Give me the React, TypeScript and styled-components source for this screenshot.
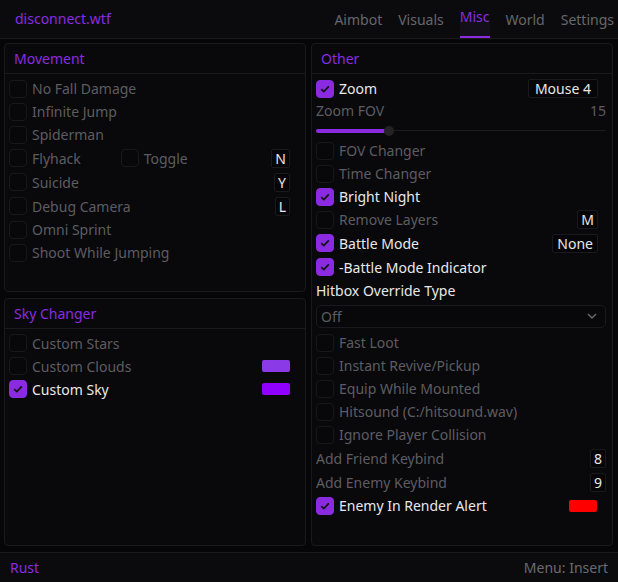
import React from "react";
import styled, { createGlobalStyle } from "styled-components";

const accent = "#8a2be2";
const bright = "#e8e8ea";
const dim = "#5d5d61";
const line = "#1a191d";

const GlobalStyle = createGlobalStyle`
  html, body {
    margin: 0;
    padding: 0;
    background: #050507;
  }
  body {
    font-family: "Noto Sans", "Open Sans", sans-serif;
    font-size: 14px;
    color: ${bright};
  }
`;

const Window = styled.div`
  width: 618px;
  height: 582px;
  display: flex;
  flex-direction: column;
  background: #060608;
  overflow: hidden;
`;

const Header = styled.div`
  height: 38px;
  flex: none;
  display: flex;
  align-items: stretch;
  background: #0b0b0d;
  border-bottom: 1px solid ${line};
  padding: 0 4px 0 15px;
`;

const Brand = styled.div`
  color: ${accent};
  display: flex;
  align-items: center;
  padding-bottom: 1px;
`;

const Tabs = styled.div`
  margin-left: auto;
  display: flex;
  gap: 16px;
`;

const Tab = styled.div<{ $active?: boolean }>`
  display: flex;
  align-items: center;
  padding-top: ${({ $active }) => ($active ? "0" : "2px")};
  padding-bottom: ${({ $active }) => ($active ? "4px" : "0")};
  color: ${({ $active }) => ($active ? accent : "#67676b")};
  background: ${({ $active }) =>
    $active ? "linear-gradient(#0b0b0d 55%, #141019 55%)" : "transparent"};
  border-bottom: 2px solid ${({ $active }) => ($active ? accent : "transparent")};
  box-sizing: border-box;
  height: 38px;
`;

const Body = styled.div`
  flex: 1;
  display: grid;
  grid-template-columns: 1fr 1fr;
  gap: 5px;
  padding: 4px 5px 6px 4px;
  min-height: 0;
`;

const Column = styled.div`
  display: flex;
  flex-direction: column;
  gap: 6px;
  min-height: 0;
`;

const Panel = styled.div`
  flex: 1;
  background: #09080b;
  border: 1px solid ${line};
  border-radius: 4px;
  display: flex;
  flex-direction: column;
  min-height: 0;
`;

const PanelTitle = styled.div`
  height: 29px;
  flex: none;
  display: flex;
  align-items: center;
  padding-left: 9px;
  color: ${accent};
  border-bottom: 1px solid ${line};
`;

const PanelBody = styled.div`
  padding: 3px 15px 0 4px;
  display: flex;
  flex-direction: column;
`;

const Row = styled.div<{ $h?: number }>`
  height: ${({ $h }) => $h ?? 23}px;
  display: flex;
  align-items: center;
  flex: none;
`;

const Box = styled.span<{ $on?: boolean }>`
  width: 18px;
  height: 18px;
  box-sizing: border-box;
  border-radius: 4px;
  flex: none;
  display: flex;
  align-items: center;
  justify-content: center;
  background: ${({ $on }) => ($on ? accent : "#08070a")};
  border: 1px solid ${({ $on }) => ($on ? accent : "#18171b")};
`;

const Label = styled.span<{ $on?: boolean; $gap?: number }>`
  margin-left: ${({ $gap }) => $gap ?? 5}px;
  color: ${({ $on }) => ($on ? bright : dim)};
  white-space: nowrap;
`;

const Right = styled.div<{ $out?: number }>`
  margin-left: auto;
  margin-right: ${({ $out }) => -($out ?? 0)}px;
  display: flex;
  align-items: center;
`;

const Key = styled.span<{ $pad?: number }>`
  height: 19px;
  box-sizing: border-box;
  padding: 0 ${({ $pad }) => $pad ?? 3}px;
  display: flex;
  align-items: center;
  justify-content: center;
  border: 1px solid ${line};
  border-radius: 2px;
  background: #060608;
  color: ${bright};
  font-size: 14px;
`;

const Swatch = styled.span<{ $color: string }>`
  width: 28px;
  height: 12px;
  border-radius: 2px;
  background: ${({ $color }) => $color};
`;

const Value = styled.span`
  margin-left: auto;
  color: ${dim};
  margin-right: -9px;
`;

const SliderTrack = styled.div`
  position: relative;
  flex: 1;
  height: 1px;
  margin-right: -9px;
  background: #1c1b20;
`;

const SliderFill = styled.div`
  height: 4px;
  margin-top: -1px;
  background: ${accent};
  border-radius: 2px;
`;

const SliderGrab = styled.div`
  position: absolute;
  top: -4px;
  width: 10px;
  height: 10px;
  margin-left: -5px;
  border-radius: 50%;
  background: #242328;
`;

const Combo = styled.div`
  flex: 1;
  margin-right: -9px;
  height: 23px;
  box-sizing: border-box;
  border: 1px solid ${line};
  border-radius: 5px;
  display: flex;
  align-items: center;
  padding: 0 8px 0 4px;
  color: ${dim};
  background: #08070a;
`;

const Footer = styled.div`
  height: 29px;
  flex: none;
  display: flex;
  align-items: center;
  justify-content: space-between;
  padding: 0 10px;
  background: #0b0b0d;
  border-top: 1px solid ${line};
`;

const FooterBrand = styled.span`
  color: ${accent};
`;

const FooterHint = styled.span`
  color: #6a6a6e;
`;

const Check = () => (
  <svg width="10" height="8" viewBox="0 0 10 8">
    <path d="M1.2 4.2 L3.8 6.6 L8.8 1.4" stroke="#111" strokeWidth="1.7" fill="none" />
  </svg>
);

const Toggle: React.FC<{ on?: boolean; label: string; gap?: number }> = ({ on, label, gap }) => (
  <>
    <Box $on={on}>{on && <Check />}</Box>
    <Label $on={on} $gap={gap}>
      {label}
    </Label>
  </>
);

const Chevron = () => (
  <svg width="10" height="6" viewBox="0 0 10 6">
    <path d="M1 1 L5 5 L9 1" stroke="#6a6a70" strokeWidth="1.4" fill="none" />
  </svg>
);

const App = () => {
  const fov = 15;
  const pct = 24;
  return (
    <Window>
      <GlobalStyle />
      <Header>
        <Brand>disconnect.wtf</Brand>
        <Tabs>
          <Tab>Aimbot</Tab>
          <Tab>Visuals</Tab>
          <Tab $active>Misc</Tab>
          <Tab>World</Tab>
          <Tab>Settings</Tab>
        </Tabs>
      </Header>
      <Body>
        <Column>
          <Panel>
            <PanelTitle>Movement</PanelTitle>
            <PanelBody>
              <Row><Toggle label="No Fall Damage" /></Row>
              <Row><Toggle label="Infinite Jump" /></Row>
              <Row><Toggle label="Spiderman" /></Row>
              <Row $h={24}>
                <Toggle label="Flyhack" />
                <Box style={{ marginLeft: 40 }} />
                <Label $gap={5}>Toggle</Label>
                <Right><Key>N</Key></Right>
              </Row>
              <Row $h={24}>
                <Toggle label="Suicide" />
                <Right><Key>Y</Key></Right>
              </Row>
              <Row $h={24}>
                <Toggle label="Debug Camera" />
                <Right><Key>L</Key></Right>
              </Row>
              <Row><Toggle label="Omni Sprint" /></Row>
              <Row><Toggle label="Shoot While Jumping" /></Row>
            </PanelBody>
          </Panel>
          <Panel>
            <PanelTitle>Sky Changer</PanelTitle>
            <PanelBody>
              <Row><Toggle label="Custom Stars" /></Row>
              <Row>
                <Toggle label="Custom Clouds" />
                <Right><Swatch $color="#8a3ae6" /></Right>
              </Row>
              <Row>
                <Toggle on label="Custom Sky" />
                <Right><Swatch $color="#8f00ff" /></Right>
              </Row>
            </PanelBody>
          </Panel>
        </Column>
        <Column>
          <Panel>
            <PanelTitle>Other</PanelTitle>
            <PanelBody>
              <Row>
                <Toggle on label="Zoom" />
                <Right $out={1}><Key $pad={6}>Mouse 4</Key></Right>
              </Row>
              <Row $h={21}>
                <Label $gap={0}>Zoom FOV</Label>
                <Value>{fov}</Value>
              </Row>
              <Row $h={18}>
                <SliderTrack>
                  <SliderFill style={{ width: `${pct}%` }} />
                  <SliderGrab style={{ left: `${pct + 1.2}%` }} />
                </SliderTrack>
              </Row>
              <Row><Toggle label="FOV Changer" /></Row>
              <Row><Toggle label="Time Changer" /></Row>
              <Row><Toggle on label="Bright Night" /></Row>
              <Row>
                <Toggle label="Remove Layers" />
                <Right $out={1}><Key>M</Key></Right>
              </Row>
              <Row $h={24}>
                <Toggle on label="Battle Mode" />
                <Right $out={1}><Key $pad={4}>None</Key></Right>
              </Row>
              <Row $h={24}><Toggle on label="-Battle Mode Indicator" /></Row>
              <Row $h={22}>
                <Label $on $gap={0}>Hitbox Override Type</Label>
              </Row>
              <Row $h={30}>
                <Combo>
                  Off
                  <Right><Chevron /></Right>
                </Combo>
              </Row>
              <Row><Toggle label="Fast Loot" /></Row>
              <Row><Toggle label="Instant Revive/Pickup" /></Row>
              <Row><Toggle label="Equip While Mounted" /></Row>
              <Row><Toggle label="Hitsound (C:/hitsound.wav)" /></Row>
              <Row><Toggle label="Ignore Player Collision" /></Row>
              <Row $h={24}>
                <Label $gap={0}>Add Friend Keybind</Label>
                <Right $out={9}><Key>8</Key></Right>
              </Row>
              <Row $h={24}>
                <Label $gap={0}>Add Enemy Keybind</Label>
                <Right $out={9}><Key>9</Key></Right>
              </Row>
              <Row>
                <Toggle on label="Enemy In Render Alert" />
                <Right><Swatch $color="#ff0000" /></Right>
              </Row>
            </PanelBody>
          </Panel>
        </Column>
      </Body>
      <Footer>
        <FooterBrand>Rust</FooterBrand>
        <FooterHint>Menu: Insert</FooterHint>
      </Footer>
    </Window>
  );
};

export default App;
